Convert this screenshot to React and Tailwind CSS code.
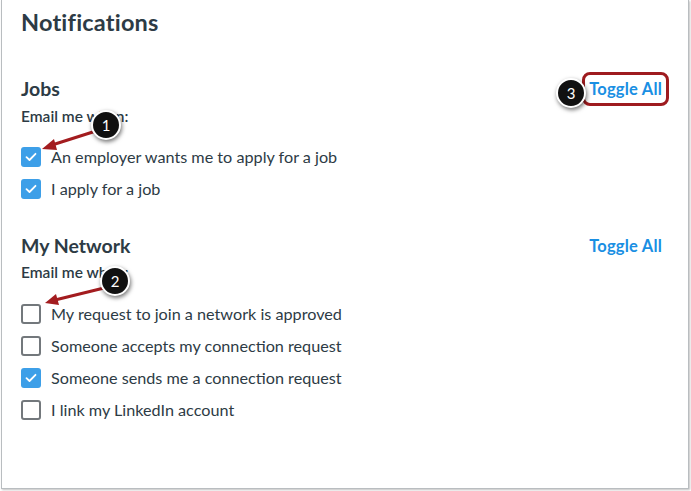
import React from "react";

const jobs = [
  { label: "An employer wants me to apply for a job", checked: true },
  { label: "I apply for a job", checked: true },
];

const network = [
  { label: "My request to join a network is approved", checked: false },
  { label: "Someone accepts my connection request", checked: false },
  { label: "Someone sends me a connection request", checked: true },
  { label: "I link my LinkedIn account", checked: false },
];

function Box({ checked }) {
  if (checked) {
    return (
      <span className="w-[20px] h-[20px] rounded-[3px] bg-[#3d9fe8] flex items-center justify-center shrink-0">
        <svg width="12" height="10" viewBox="0 0 12 10" fill="none">
          <path d="M1.5 5.2 L4.5 8 L10.5 1.8" stroke="white" strokeWidth="1.8" strokeLinecap="round" strokeLinejoin="round" />
        </svg>
      </span>
    );
  }
  return <span className="w-[20px] h-[20px] rounded-[3px] border-2 border-[#73787c] bg-white shrink-0" />;
}

function Row({ item }) {
  return (
    <div className="h-[32px] flex items-center gap-[10px]">
      <Box checked={item.checked} />
      <span className="text-[16.2px] text-[#2d3b45]">{item.label}</span>
    </div>
  );
}

function Callout({ n, className }) {
  return (
    <div
      className={
        "absolute w-[30px] h-[30px] rounded-full bg-[#111] border-2 border-white shadow-[1px_2px_4px_rgba(0,0,0,0.55)] flex items-center justify-center text-white text-[15px] " +
        className
      }
    >
      {n}
    </div>
  );
}

export default function App() {
  return (
    <div className="relative w-[691px] h-[491px] bg-white overflow-hidden" style={{ fontFamily: "Lato, 'Open Sans', sans-serif" }}>
      <div className="ml-[1px] w-[688px] h-[489px] border-l border-r border-b border-[#b9bdc0] shadow-[1px_1px_2px_rgba(0,0,0,0.25)] pl-[19px] pr-[26px] pt-[8px] text-[#2d3b45]">
        <h1 className="h-[28px] leading-[28px] text-[23.5px] font-bold tracking-[0.2px]">Notifications</h1>

        <div className="mt-[39px] h-[28px] flex items-center justify-between">
          <h2 className="text-[19.5px] font-bold">Jobs</h2>
          <span className="text-[16.5px] font-bold text-[#1a8fe3] tracking-[0.2px]">Toggle All</span>
        </div>
        <div className="mt-[4px] h-[20px] flex items-center text-[15.5px] font-semibold">Email me when:</div>
        <div className="mt-[14px]">
          {jobs.map((item, i) => (
            <Row key={i} item={item} />
          ))}
        </div>

        <div className="mt-[27px] h-[28px] flex items-center justify-between">
          <h2 className="text-[19.5px] font-bold">My Network</h2>
          <span className="text-[16.5px] font-bold text-[#1a8fe3] tracking-[0.2px]">Toggle All</span>
        </div>
        <div className="mt-[3px] h-[20px] flex items-center text-[15.5px] font-semibold">Email me when:</div>
        <div className="mt-[15px]">
          {network.map((item, i) => (
            <Row key={i} item={item} />
          ))}
        </div>
      </div>

      {/* annotation overlay */}
      <div className="absolute left-[582px] top-[72px] w-[87px] h-[34px] rounded-[8px] border-[3px] border-[#9e1b1f]" />
      <svg className="absolute left-0 top-0 pointer-events-none" width="691" height="491">
        <line x1="96" y1="131" x2="52" y2="145" stroke="#a31c1f" strokeWidth="3" />
        <polygon points="42,149 54,139 57,150" fill="#a31c1f" />
        <line x1="104" y1="288" x2="55" y2="300" stroke="#a31c1f" strokeWidth="3" />
        <polygon points="45,303 56,294 59,305" fill="#a31c1f" />
      </svg>
      <Callout n="1" className="left-[91px] top-[110px]" />
      <Callout n="2" className="left-[100px] top-[266px]" />
      <Callout n="3" className="left-[556px] top-[78px]" />
    </div>
  );
}
